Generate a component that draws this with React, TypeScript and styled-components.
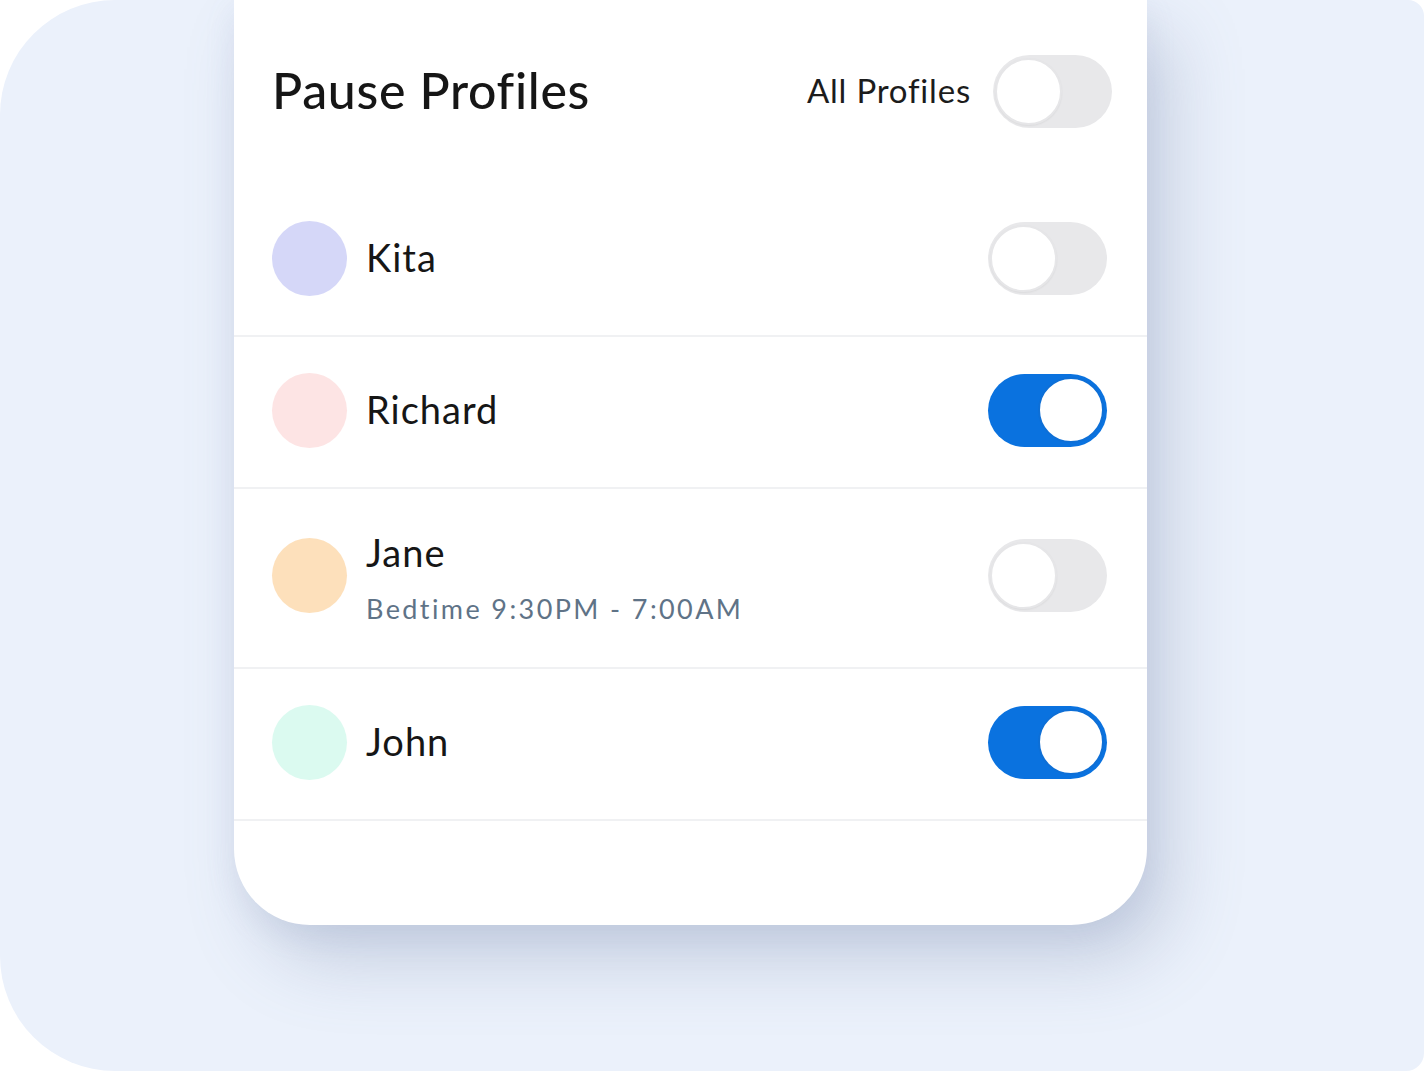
import React from "react";
import styled, { createGlobalStyle } from "styled-components";

const Global = createGlobalStyle`
  html, body { margin: 0; padding: 0; background: #ffffff; }
  body { font-family: Lato, "Open Sans", sans-serif; -webkit-font-smoothing: antialiased; }
  #root { width: 1424px; height: 1071px; overflow: hidden; }
`;

const Stage = styled.div`
  width: 1424px;
  height: 1071px;
  box-sizing: border-box;
  background: #ebf1fb;
  border-radius: 115px 16px 18px 115px;
  display: flex;
  align-items: flex-start;
  padding-left: 234px;
  overflow: hidden;
`;

const Card = styled.div`
  width: 913px;
  height: 925px;
  background: #ffffff;
  border-radius: 0 0 76px 76px;
  box-shadow: 24px 36px 70px rgba(112, 128, 166, 0.3), 0 10px 30px rgba(140, 155, 190, 0.14);
  display: flex;
  flex-direction: column;
`;

const Header = styled.div`
  height: 185px;
  flex: none;
  display: flex;
  align-items: center;
  justify-content: space-between;
  padding: 0 35px 2px 38px;
  box-sizing: border-box;
`;

const Title = styled.h1`
  margin: -3px 0 0 0;
  font-family: Lato, sans-serif;
  font-weight: 500;
  font-size: 50px;
  color: #161616;
  letter-spacing: 0.7px;
`;

const HeaderRight = styled.div`
  display: flex;
  align-items: center;
  gap: 22px;
`;

const AllLabel = styled.span`
  font-family: Lato, sans-serif;
  font-size: 33px;
  color: #1c1c1c;
  letter-spacing: 0.8px;
  margin-top: -3px;
`;

const Row = styled.div<{ $tall?: boolean }>`
  height: ${(p) => (p.$tall ? 178 : 150)}px;
  flex: none;
  box-sizing: content-box;
  border-bottom: 2px solid #f0f1f3;
  display: flex;
  align-items: center;
  padding: 0 40px 0 38px;
  gap: 19px;
`;

const RowBody = styled.div`
  flex: 1;
  display: flex;
  align-items: center;
  gap: 19px;
  margin-top: -4px;
`;

const Avatar = styled.div<{ $color: string }>`
  width: 75px;
  height: 75px;
  border-radius: 50%;
  background: ${(p) => p.$color};
  flex: none;
`;

const Info = styled.div<{ $tall?: boolean }>`
  flex: 1;
  display: flex;
  flex-direction: column;
  gap: 20px;
  margin-top: ${(p) => (p.$tall ? "4px" : "0")};
`;

const Name = styled.div`
  font-family: Lato, sans-serif;
  font-size: 38px;
  color: #161616;
  letter-spacing: 1px;
  line-height: 1.1;
`;

const Sub = styled.div`
  font-family: Lato, sans-serif;
  font-size: 27px;
  color: #5f7387;
  letter-spacing: 2.4px;
  line-height: 1.1;
`;

const Track = styled.div<{ $on: boolean }>`
  width: 119px;
  height: 73px;
  border-radius: 37px;
  box-sizing: border-box;
  flex: none;
  display: flex;
  align-items: center;
  justify-content: ${(p) => (p.$on ? "flex-end" : "flex-start")};
  padding: ${(p) => (p.$on ? "0 3px" : "0 2px")};
  background: ${(p) => (p.$on ? "#0a72df" : "#e8e8ea")};
`;

const Knob = styled.div<{ $on: boolean }>`
  width: ${(p) => (p.$on ? 66 : 67)}px;
  height: ${(p) => (p.$on ? 66 : 67)}px;
  border-radius: 50%;
  background: #ffffff;
  box-sizing: border-box;
  border: 2px solid ${(p) => (p.$on ? "#0e6fd6" : "#e6e6e8")};
  box-shadow: ${(p) => (p.$on ? "none" : "0 1px 2px rgba(0,0,0,0.06)")};
`;

const Toggle = ({ on }: { on: boolean }) => (
  <Track $on={on}>
    <Knob $on={on} />
  </Track>
);

const profiles = [
  { name: "Kita", color: "#d5d7f8", on: false },
  { name: "Richard", color: "#fde4e4", on: true },
  { name: "Jane", color: "#fde0bb", on: false, sub: "Bedtime 9:30PM - 7:00AM" },
  { name: "John", color: "#dbfaf0", on: true },
];

export default function App() {
  return (
    <>
      <Global />
      <Stage>
        <Card>
          <Header>
            <Title>Pause Profiles</Title>
            <HeaderRight>
              <AllLabel>All Profiles</AllLabel>
              <Toggle on={false} />
            </HeaderRight>
          </Header>
          {profiles.map((p) => (
            <Row key={p.name} $tall={!!p.sub}>
              <RowBody>
                <Avatar $color={p.color} />
                <Info $tall={!!p.sub}>
                  <Name>{p.name}</Name>
                  {p.sub && <Sub>{p.sub}</Sub>}
                </Info>
                <Toggle on={p.on} />
              </RowBody>
            </Row>
          ))}
        </Card>
      </Stage>
    </>
  );
}
